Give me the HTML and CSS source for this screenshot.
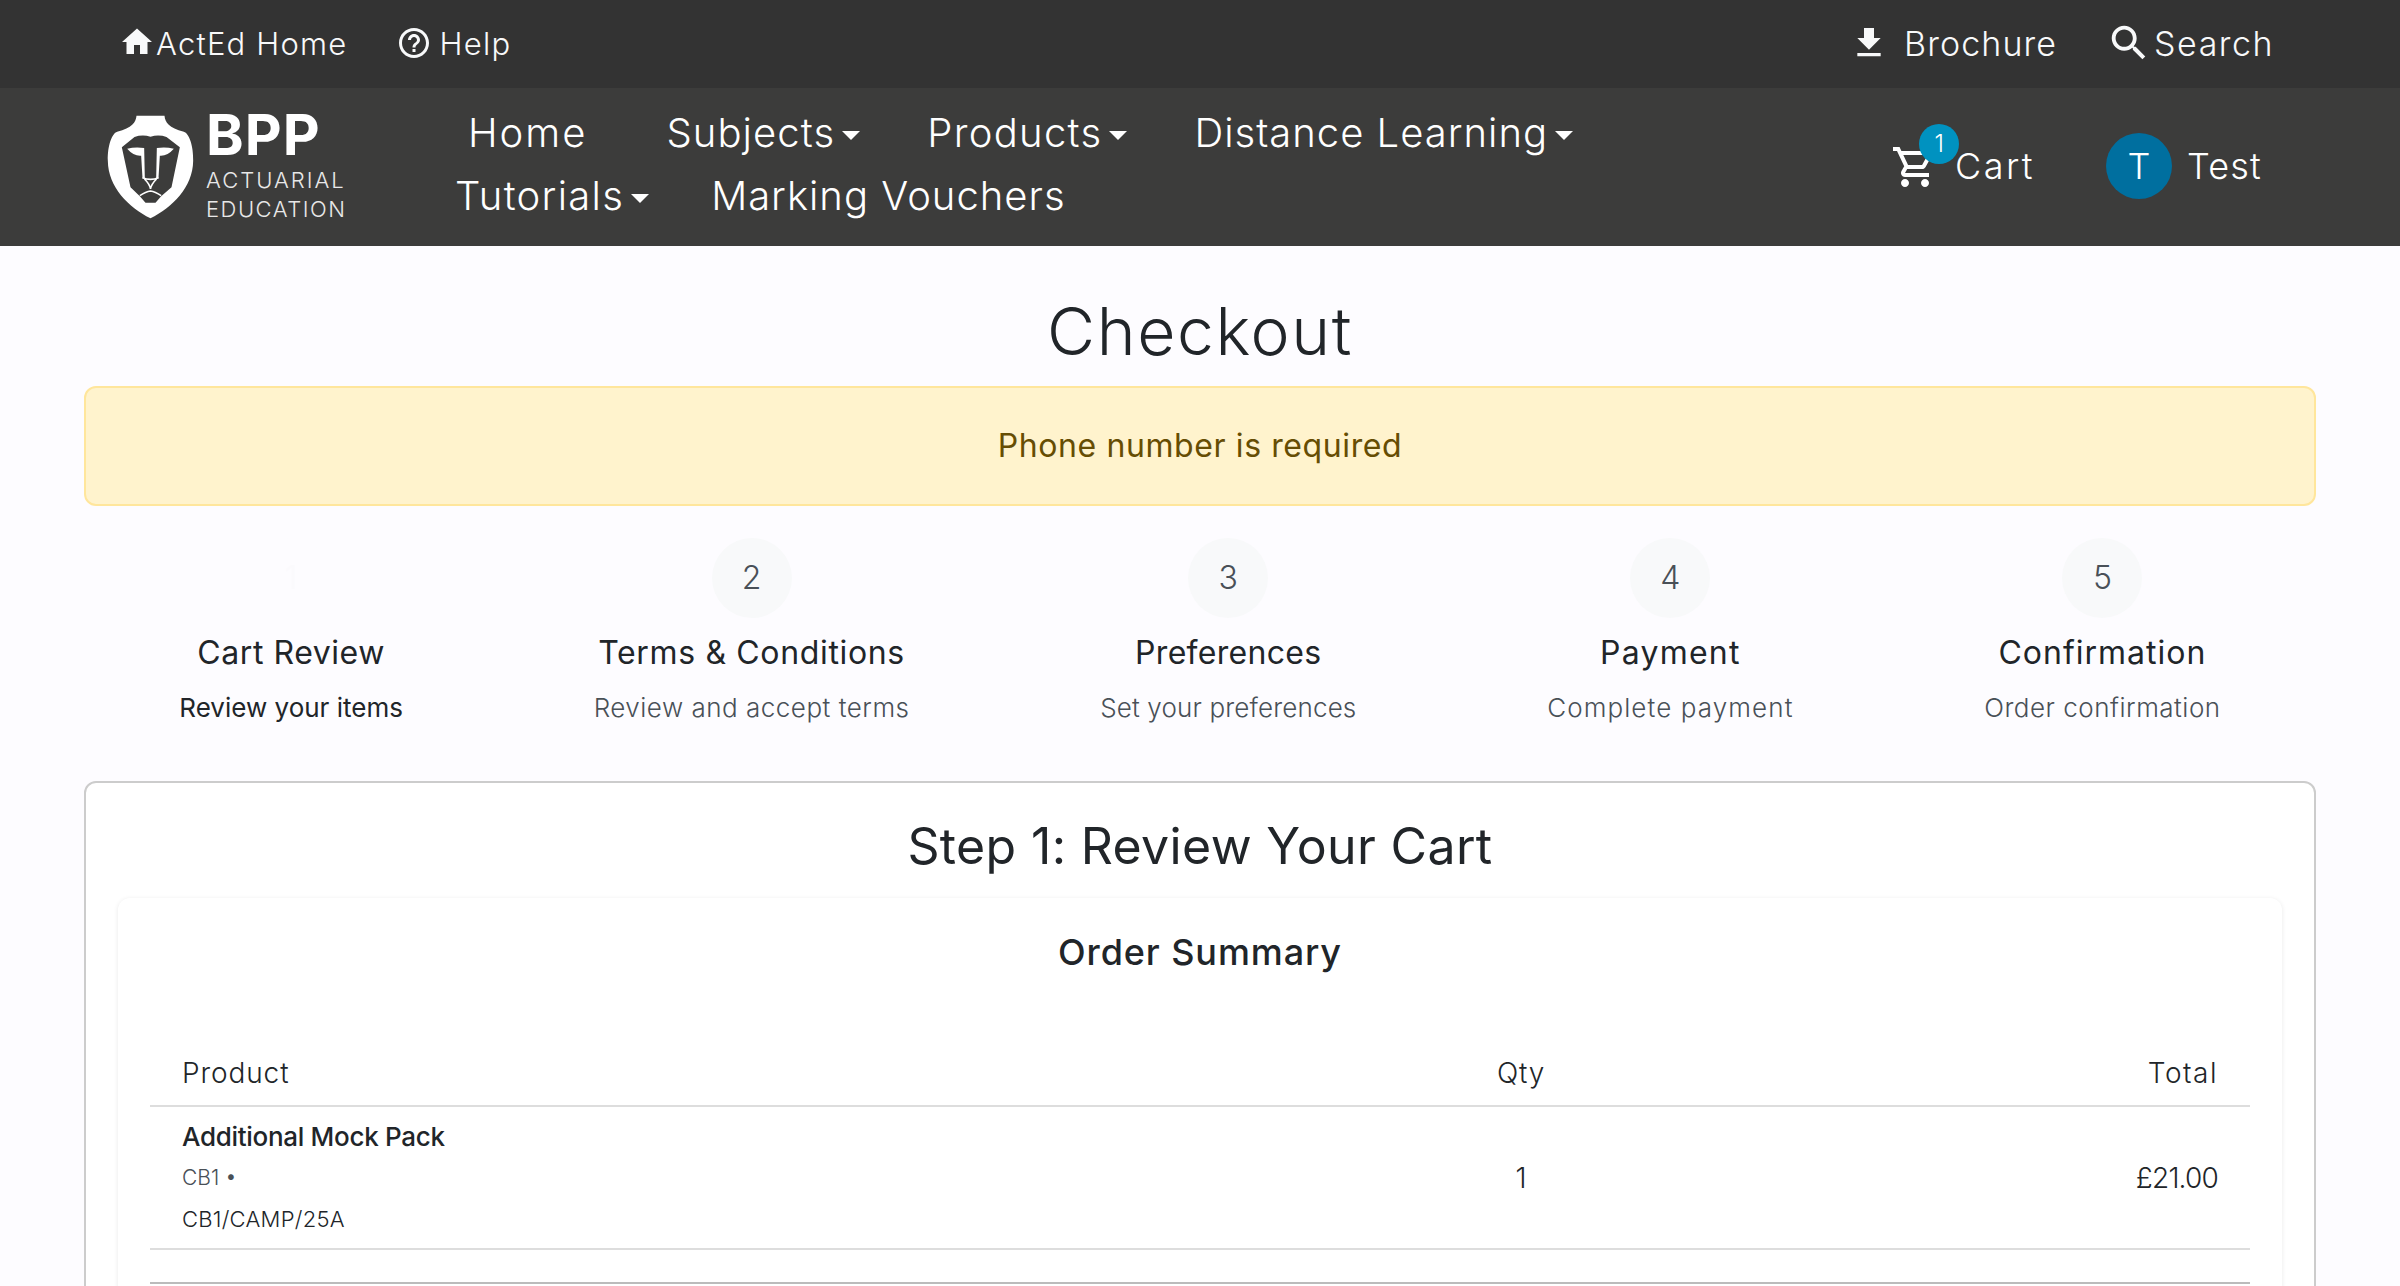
FILE: index.html
```html
<!DOCTYPE html>
<html>
<head>
    <title>Checkout</title>
    <link rel="stylesheet" href="styles.css">
</head>
<body>
    <div class="topbar">
        <div class="topbar-group">
            <a class="top-link home-link">
                <svg class="icon-home" viewBox="0 0 24 24"><path d="M10 20v-6h4v6h5v-8h3L12 3 2 12h3v8z"/></svg>
                <span class="txt-acted">ActEd Home</span>
            </a>
            <a class="top-link help-link">
                <svg class="icon-help" viewBox="0 0 24 24"><path d="M11 18h2v-2h-2v2zm1-16C6.48 2 2 6.48 2 12s4.48 10 10 10 10-4.48 10-10S17.52 2 12 2zm0 18c-4.41 0-8-3.59-8-8s3.59-8 8-8 8 3.59 8 8-3.59 8-8 8zm0-14c-2.21 0-4 1.79-4 4h2c0-1.1.9-2 2-2s2 .9 2 2c0 2-3 1.75-3 5h2c0-2.25 3-2.5 3-5 0-2.21-1.79-4-4-4z"/></svg>
                <span class="txt-help">Help</span>
            </a>
        </div>
        <div class="topbar-group">
            <a class="top-link brochure-link">
                <svg class="icon-download" viewBox="0 0 24 24"><path d="M19 9h-4V3H9v6H5l7 7 7-7zM5 18v2h14v-2H5z"/></svg>
                <span class="txt-brochure">Brochure</span>
            </a>
            <a class="top-link search-link">
                <svg class="icon-search" viewBox="0 0 24 24"><path d="M15.5 14h-.79l-.28-.27C15.41 12.59 16 11.11 16 9.5 16 5.91 13.09 3 9.5 3S3 5.91 3 9.5 5.91 16 9.5 16c1.61 0 3.09-.59 4.23-1.57l.27.28v.79l5 4.99L20.49 19l-4.99-5zm-6 0C7.01 14 5 11.99 5 9.5S7.01 5 9.5 5 14 7.01 14 9.5 11.99 14 9.5 14z"/></svg>
                <span class="txt-search">Search</span>
            </a>
        </div>
    </div>

    <nav class="navbar">
        <div class="brand">
            <svg class="brand-mark" viewBox="20 25 260 318">
                <path class="shield" d="M108 30H192C194 50 205 66 250 78C266 83 279 120 278 165C277 245 215 305 150 338C85 305 23 245 22 165C21 120 34 83 50 78C95 66 106 50 108 30Z"/>
                <path class="face" d="M64 125L102 94Q125 86 150 93Q175 86 198 94L238 125L213 245L182 272L165 291H135L118 272L90 245Z"/>
                <path class="face-line" d="M80 129Q105 123 131 127L133 218L126 218L122 150Q100 152 80 129ZM220 129Q195 123 169 127L167 218L174 218L178 150Q200 152 220 129Z"/>
                <path class="face-stroke" d="M126 216Q150 226 174 216M132 220Q148 236 150 250M168 220Q152 236 150 250M118 270Q136 258 150 256Q164 258 182 270"/>
            </svg>
            <div class="brand-text">
                <div class="brand-bpp">BPP</div>
                <div class="brand-sub">ACTUARIAL</div>
                <div class="brand-sub brand-edu">EDUCATION</div>
            </div>
        </div>
        <div class="menu">
            <a class="menu-link m-home">Home</a>
            <a class="menu-link caret m-subjects">Subjects</a>
            <a class="menu-link caret m-products">Products</a>
            <a class="menu-link caret m-distance">Distance Learning</a>
            <a class="menu-link caret m-tutorials">Tutorials</a>
            <a class="menu-link m-marking">Marking Vouchers</a>
        </div>
        <div class="nav-right">
            <a class="cart">
                <svg class="icon-cart" viewBox="0 0 24 24"><path d="M15.55 13c.75 0 1.41-.41 1.75-1.03l3.58-6.49c.37-.66-.11-1.48-.87-1.48H5.21l-.94-2H1v2h2l3.6 7.59-1.35 2.44C4.52 15.37 5.48 17 7 17h12v-2H7l1.1-2h7.45zM6.16 6h12.15l-2.76 5H8.53L6.16 6zM7 18c-1.1 0-1.99.9-1.99 2S5.9 22 7 22s2-.9 2-2-.9-2-2-2zm10 0c-1.1 0-1.99.9-1.99 2s.89 2 1.99 2 2-.9 2-2-.9-2-2-2z"/></svg>
                <span class="cart-badge">1</span>
                <span class="cart-txt">Cart</span>
            </a>
            <a class="user">
                <span class="avatar">T</span>
                <span class="user-txt">Test</span>
            </a>
        </div>
    </nav>

    <main class="page">
        <h1 class="page-title">Checkout</h1>
        <div class="alert">Phone number is required</div>

        <div class="steps">
            <div class="step active">
                <div class="step-num">1</div>
                <div class="step-title s1">Cart Review</div>
                <div class="step-sub d1">Review your items</div>
            </div>
            <div class="step">
                <div class="step-num">2</div>
                <div class="step-title s2">Terms &amp; Conditions</div>
                <div class="step-sub d2">Review and accept terms</div>
            </div>
            <div class="step">
                <div class="step-num">3</div>
                <div class="step-title s3">Preferences</div>
                <div class="step-sub d3">Set your preferences</div>
            </div>
            <div class="step">
                <div class="step-num">4</div>
                <div class="step-title s4">Payment</div>
                <div class="step-sub d4">Complete payment</div>
            </div>
            <div class="step">
                <div class="step-num">5</div>
                <div class="step-title s5">Confirmation</div>
                <div class="step-sub d5">Order confirmation</div>
            </div>
        </div>

        <section class="panel">
            <h2 class="panel-title">Step 1: Review Your Cart</h2>
            <div class="summary">
                <h3 class="summary-title">Order Summary</h3>
                <table class="order">
                    <thead>
                        <tr>
                            <th class="col-product th-product">Product</th>
                            <th class="col-qty th-qty">Qty</th>
                            <th class="col-total th-total">Total</th>
                        </tr>
                    </thead>
                    <tbody>
                        <tr>
                            <td class="col-product">
                                <div class="item-name">Additional Mock Pack</div>
                                <div class="item-subject">CB1 •</div>
                                <div class="item-code">CB1/CAMP/25A</div>
                            </td>
                            <td class="col-qty">1</td>
                            <td class="col-total td-price">£21.00</td>
                        </tr>
                        <tr class="spacer"><td colspan="3"></td></tr>
                        <tr class="totals"><td colspan="3"></td></tr>
                    </tbody>
                </table>
            </div>
        </section>
    </main>
</body>
</html>
```

FILE: styles.css
```css
html {
    height: 100%;
    overflow: hidden;
}

body {
    margin: 0;
    height: 100%;
    overflow: hidden;
    font-family: Inter, "Open Sans", sans-serif;
    font-weight: 300;
    background-color: #fdfcff;
    color: #212529;
}

svg {
    fill: currentColor;
    flex: none;
    display: block;
}

/* top strip */
.topbar {
    height: 88px;
    background-color: #333333;
    color: #f8f9fa;
    display: flex;
    justify-content: space-between;
    align-items: center;
    padding: 0 126px 2px 119px;
    box-sizing: border-box;
    font-size: 31px;
}

.topbar-group {
    display: flex;
    align-items: center;
}

.top-link {
    display: flex;
    align-items: center;
}

.icon-home {
    width: 36px;
    height: 36px;
    margin-top: -2px;
}

.txt-acted {
    margin-left: 1px;
    letter-spacing: 1.2px;
}

.help-link {
    margin-left: 49px;
}

.icon-help {
    width: 36px;
    height: 36px;
}

.txt-help {
    margin-left: 7px;
    letter-spacing: 1.3px;
}

.icon-download {
    width: 40px;
    height: 40px;
}

.txt-brochure {
    margin-left: 15px;
    font-size: 34px;
    letter-spacing: 1.1px;
}

.search-link {
    margin-left: 49px;
}

.icon-search {
    width: 46px;
    height: 46px;
}

.txt-search {
    margin-left: 2px;
    font-size: 34px;
    letter-spacing: 1.5px;
}

/* main nav */
.navbar {
    height: 158px;
    background-color: #3c3c3b;
    color: #ffffff;
    display: flex;
    align-items: center;
    padding: 0 138px 0 107px;
    box-sizing: border-box;
}

.brand {
    display: flex;
    align-items: center;
    width: 349px;
    flex: none;
}

.brand-mark {
    width: 87px;
    height: 106px;
}

.shield {
    fill: #ffffff;
}

.face {
    fill: #3c3c3b;
}

.face-line {
    fill: #ffffff;
}

.face-stroke {
    fill: none;
    stroke: #ffffff;
    stroke-width: 5;
}

.brand-text {
    margin-left: 12px;
}

.brand-bpp {
    font-size: 57px;
    font-weight: 700;
    line-height: 50px;
    letter-spacing: 1px;
    margin-bottom: 6px;
}

.brand-sub {
    font-size: 22px;
    font-weight: 300;
    line-height: 29px;
    letter-spacing: 2px;
    color: #e8e8e8;
}

.brand-edu {
    letter-spacing: 1.5px;
}

.menu {
    display: flex;
    flex-wrap: wrap;
    width: 1180px;
    flex: none;
    font-size: 40px;
    line-height: 63px;
    margin-bottom: 6px;
}

.menu-link {
    white-space: nowrap;
}

.caret::after {
    content: "";
    display: inline-block;
    margin-left: 7px;
    vertical-align: 7px;
    border-top: 9px solid #ffffff;
    border-left: 9px solid transparent;
    border-right: 9px solid transparent;
}

.m-home {
    margin-left: 12px;
    letter-spacing: 2px;
}

.m-subjects {
    margin-left: 79px;
    letter-spacing: 1.1px;
}

.m-products {
    margin-left: 67px;
    letter-spacing: 1.3px;
}

.m-distance {
    margin-left: 67px;
    letter-spacing: 1px;
}

.m-tutorials {
    margin-left: -1px;
    margin-right: 62px;
    letter-spacing: 1.3px;
}

.m-marking {
    margin-right: 400px;
    letter-spacing: 1px;
}

.nav-right {
    display: flex;
    align-items: center;
    margin-left: auto;
    margin-bottom: 2px;
    font-size: 36px;
}

.cart {
    display: flex;
    align-items: center;
    position: relative;
}

.icon-cart {
    width: 48px;
    height: 48px;
    margin-top: 2px;
}

.cart-badge {
    position: absolute;
    left: 28px;
    top: -17px;
    width: 40px;
    height: 40px;
    border-radius: 50%;
    background-color: #0092c0;
    color: #ffffff;
    font-size: 24px;
    line-height: 40px;
    text-align: center;
}

.cart-txt {
    margin-left: 16px;
    letter-spacing: 2.4px;
}

.user {
    display: flex;
    align-items: center;
    margin-left: 71px;
}

.avatar {
    width: 66px;
    height: 66px;
    border-radius: 50%;
    background-color: #006f9f;
    font-size: 36px;
    line-height: 66px;
    text-align: center;
}

.user-txt {
    margin-left: 15px;
    letter-spacing: 1.2px;
}

/* page */
.page {
    padding: 0 84px;
}

.page-title {
    margin: 0;
    height: 140px;
    padding-top: 30px;
    box-sizing: border-box;
    line-height: 110px;
    text-align: center;
    font-size: 66px;
    font-weight: 300;
    letter-spacing: 1.6px;
    color: #212529;
}

.alert {
    height: 120px;
    box-sizing: border-box;
    background-color: #fff3cd;
    border: 2px solid #ffe69c;
    border-radius: 12px;
    color: #664d03;
    font-size: 32px;
    line-height: 116px;
    text-align: center;
    letter-spacing: 0.6px;
    font-weight: 400;
}

.steps {
    display: flex;
    justify-content: space-around;
    margin-top: 32px;
    height: 243px;
}

.step {
    text-align: center;
    display: flex;
    flex-direction: column;
    align-items: center;
}

.step-num {
    width: 80px;
    height: 80px;
    border-radius: 50%;
    background-color: #f8f9fa;
    color: #495057;
    font-size: 32px;
    line-height: 80px;
}

.active .step-num {
    background-color: #fdfcff;
    color: #fbfafd;
}

.step-title {
    margin-top: 14px;
    font-size: 32px;
    line-height: 42px;
    font-weight: 400;
}

.s1 { letter-spacing: 0.55px; }
.s2 { letter-spacing: 0.65px; }
.s3 { letter-spacing: 0.3px; }
.s4 { letter-spacing: 1.25px; }
.s5 { letter-spacing: 1px; }

.step-sub {
    margin-top: 14px;
    font-size: 26px;
    line-height: 40px;
    color: #495057;
}

.d1 { letter-spacing: 0.3px; }
.d2 { letter-spacing: 0.5px; }
.d3 { letter-spacing: 0.15px; }
.d4 { letter-spacing: 1.1px; }
.d5 { letter-spacing: 0.5px; }

.active .step-sub {
    color: #212529;
    font-weight: 400;
    letter-spacing: 0;
}

.panel {
    border: 2px solid #cccccc;
    border-radius: 12px;
    background-color: #ffffff;
    padding: 0 32px;
    height: 900px;
}

.panel-title {
    margin: 0;
    height: 115px;
    line-height: 126px;
    text-align: center;
    font-size: 50px;
    font-weight: 400;
    letter-spacing: 0.35px;
}

.summary {
    background-color: #ffffff;
    border-radius: 12px;
    box-shadow: 0 1px 5px rgba(0, 0, 0, 0.09);
    padding: 0 32px;
    height: 800px;
}

.summary-title {
    margin: 0;
    height: 118px;
    line-height: 108px;
    text-align: center;
    font-size: 36px;
    font-weight: 500;
    letter-spacing: 0.9px;
}

.order {
    width: 100%;
    border-collapse: collapse;
    font-size: 28px;
}

.order th {
    font-weight: 300;
    height: 90px;
    padding: 0 32px 15px;
    box-sizing: border-box;
    border-bottom: 2px solid #dddddd;
    vertical-align: bottom;
}

.order td {
    padding: 10px 32px 9px;
    border-bottom: 2px solid #dddddd;
}

.col-product {
    text-align: left;
}

.col-qty {
    text-align: center;
    width: 136px;
}

.col-total {
    text-align: right;
    width: 565px;
}

.order .th-product { letter-spacing: 0.9px; }
.order .th-qty { letter-spacing: 0.8px; }
.order .th-total { letter-spacing: 1.5px; }
.order .td-price { letter-spacing: -0.8px; }

.item-name {
    font-size: 26px;
    font-weight: 500;
    line-height: 40px;
    letter-spacing: -0.3px;
}

.item-subject {
    font-size: 21px;
    line-height: 42px;
    color: #495057;
}

.item-code {
    font-size: 22px;
    line-height: 40px;
    letter-spacing: 0.25px;
}

.order .spacer td {
    height: 34px;
    padding: 0;
    border-bottom: 2px solid #bbbbbb;
    box-sizing: border-box;
}

.order .totals td {
    border: none;
    height: 200px;
}
```
